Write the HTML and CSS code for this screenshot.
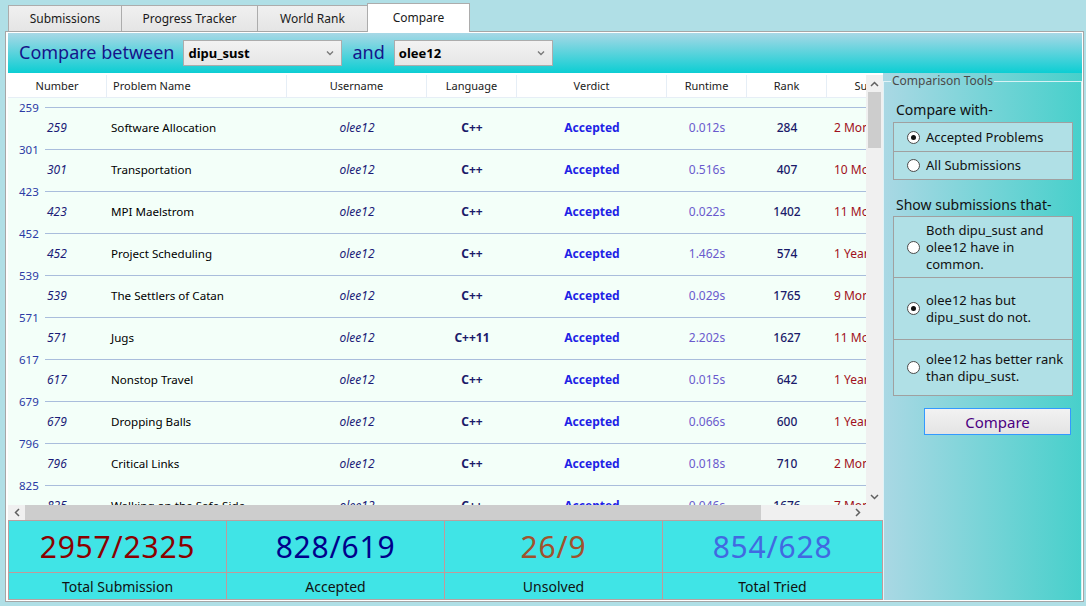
FILE: index.html
```html
<!DOCTYPE html>
<html>
<head>
<meta charset="utf-8">
<title>Compare</title>
<link rel="stylesheet" href="styles.css">
</head>
<body>
<div class="tabs">
  <div class="tab t1">Submissions</div>
  <div class="tab t2">Progress Tracker</div>
  <div class="tab t3">World Rank</div>
  <div class="tab t4 active">Compare</div>
</div>
<div class="panel">
  <div class="header">
    <span class="title">Compare between</span>
    <div class="select"><span>dipu_sust</span><svg class="chev" width="8" height="6" viewBox="0 0 8 6"><path d="M1 1.5 L4 4.5 L7 1.5" fill="none" stroke="#7a7a7a" stroke-width="1.4"/></svg></div>
    <span class="title and">and</span>
    <div class="select"><span>olee12</span><svg class="chev" width="8" height="6" viewBox="0 0 8 6"><path d="M1 1.5 L4 4.5 L7 1.5" fill="none" stroke="#7a7a7a" stroke-width="1.4"/></svg></div>
  </div>
  <div class="body">
    <div class="left">
      <div class="grid">
        <div class="grid-main">
          <div class="view">
            <div class="thead">
              <div class="c c-num">Number</div>
              <div class="c c-name hl">Problem Name</div>
              <div class="c c-user">Username</div>
              <div class="c c-lang">Language</div>
              <div class="c c-verd">Verdict</div>
              <div class="c c-run">Runtime</div>
              <div class="c c-rank">Rank</div>
              <div class="c c-time">Submission Time</div>
            </div>
            <div class="tbody">
              <div class="grp"><span class="gl">259</span><span class="gline"></span></div>
              <div class="row"><div class="c c-num num">259</div><div class="c c-name name">Software Allocation</div><div class="c c-user user">olee12</div><div class="c c-lang lang">C++</div><div class="c c-verd verd">Accepted</div><div class="c c-run run">0.012s</div><div class="c c-rank rank">284</div><div class="c c-time time">2 Months ago</div></div>
              <div class="grp"><span class="gl">301</span><span class="gline"></span></div>
              <div class="row"><div class="c c-num num">301</div><div class="c c-name name">Transportation</div><div class="c c-user user">olee12</div><div class="c c-lang lang">C++</div><div class="c c-verd verd">Accepted</div><div class="c c-run run">0.516s</div><div class="c c-rank rank">407</div><div class="c c-time time">10 Months ago</div></div>
              <div class="grp"><span class="gl">423</span><span class="gline"></span></div>
              <div class="row"><div class="c c-num num">423</div><div class="c c-name name">MPI Maelstrom</div><div class="c c-user user">olee12</div><div class="c c-lang lang">C++</div><div class="c c-verd verd">Accepted</div><div class="c c-run run">0.022s</div><div class="c c-rank rank">1402</div><div class="c c-time time">11 Months ago</div></div>
              <div class="grp"><span class="gl">452</span><span class="gline"></span></div>
              <div class="row"><div class="c c-num num">452</div><div class="c c-name name">Project Scheduling</div><div class="c c-user user">olee12</div><div class="c c-lang lang">C++</div><div class="c c-verd verd">Accepted</div><div class="c c-run run">1.462s</div><div class="c c-rank rank">574</div><div class="c c-time time">1 Year ago</div></div>
              <div class="grp"><span class="gl">539</span><span class="gline"></span></div>
              <div class="row"><div class="c c-num num">539</div><div class="c c-name name">The Settlers of Catan</div><div class="c c-user user">olee12</div><div class="c c-lang lang">C++</div><div class="c c-verd verd">Accepted</div><div class="c c-run run">0.029s</div><div class="c c-rank rank">1765</div><div class="c c-time time">9 Months ago</div></div>
              <div class="grp"><span class="gl">571</span><span class="gline"></span></div>
              <div class="row"><div class="c c-num num">571</div><div class="c c-name name">Jugs</div><div class="c c-user user">olee12</div><div class="c c-lang lang">C++11</div><div class="c c-verd verd">Accepted</div><div class="c c-run run">2.202s</div><div class="c c-rank rank">1627</div><div class="c c-time time">11 Months ago</div></div>
              <div class="grp"><span class="gl">617</span><span class="gline"></span></div>
              <div class="row"><div class="c c-num num">617</div><div class="c c-name name">Nonstop Travel</div><div class="c c-user user">olee12</div><div class="c c-lang lang">C++</div><div class="c c-verd verd">Accepted</div><div class="c c-run run">0.015s</div><div class="c c-rank rank">642</div><div class="c c-time time">1 Year ago</div></div>
              <div class="grp"><span class="gl">679</span><span class="gline"></span></div>
              <div class="row"><div class="c c-num num">679</div><div class="c c-name name">Dropping Balls</div><div class="c c-user user">olee12</div><div class="c c-lang lang">C++</div><div class="c c-verd verd">Accepted</div><div class="c c-run run">0.066s</div><div class="c c-rank rank">600</div><div class="c c-time time">1 Year ago</div></div>
              <div class="grp"><span class="gl">796</span><span class="gline"></span></div>
              <div class="row"><div class="c c-num num">796</div><div class="c c-name name">Critical Links</div><div class="c c-user user">olee12</div><div class="c c-lang lang">C++</div><div class="c c-verd verd">Accepted</div><div class="c c-run run">0.018s</div><div class="c c-rank rank">710</div><div class="c c-time time">2 Months ago</div></div>
              <div class="grp"><span class="gl">825</span><span class="gline"></span></div>
              <div class="row"><div class="c c-num num">825</div><div class="c c-name name">Walking on the Safe Side</div><div class="c c-user user">olee12</div><div class="c c-lang lang">C++</div><div class="c c-verd verd">Accepted</div><div class="c c-run run">0.046s</div><div class="c c-rank rank">1676</div><div class="c c-time time">7 Months ago</div></div>
            </div>
          </div>
          <div class="vscroll">
            <div class="sarrow"><svg width="9" height="6" viewBox="0 0 9 6"><path d="M1 5 L4.5 1.5 L8 5" fill="none" stroke="#606060" stroke-width="1.5"/></svg></div>
            <div class="vthumb"></div>
            <div class="vspace"></div>
            <div class="sarrow"><svg width="9" height="6" viewBox="0 0 9 6"><path d="M1 1 L4.5 4.5 L8 1" fill="none" stroke="#606060" stroke-width="1.5"/></svg></div>
          </div>
        </div>
        <div class="hscroll">
          <div class="harrow"><svg width="6" height="9" viewBox="0 0 6 9"><path d="M5 1 L1.5 4.5 L5 8" fill="none" stroke="#606060" stroke-width="1.5"/></svg></div>
          <div class="hthumb"></div>
          <div class="hspace"></div>
          <div class="harrow"><svg width="6" height="9" viewBox="0 0 6 9"><path d="M1 1 L4.5 4.5 L1 8" fill="none" stroke="#606060" stroke-width="1.5"/></svg></div>
          <div class="corner"></div>
        </div>
      </div>
      <div class="stats">
        <div class="stat"><div class="sv v1">2957/2325</div><div class="sl">Total Submission</div></div>
        <div class="stat"><div class="sv v2">828/619</div><div class="sl">Accepted</div></div>
        <div class="stat"><div class="sv v3">26/9</div><div class="sl">Unsolved</div></div>
        <div class="stat"><div class="sv v4">854/628</div><div class="sl">Total Tried</div></div>
      </div>
    </div>
    <div class="tools">
      <fieldset class="fs">
        <legend>Comparison Tools</legend>
        <div class="sect">Compare with-</div>
        <div class="box box1">
          <div class="opt oa1"><span class="radio on"></span><span>Accepted Problems</span></div>
          <div class="opt ob1"><span class="radio"></span><span>All Submissions</span></div>
        </div>
        <div class="sect s2">Show submissions that-</div>
        <div class="box box2">
          <div class="opt oa"><span class="radio"></span><span>Both dipu_sust and<br>olee12 have in<br>common.</span></div>
          <div class="opt ob"><span class="radio on"></span><span>olee12 has but<br>dipu_sust do not.</span></div>
          <div class="opt oc"><span class="radio"></span><span>olee12 has better rank<br>than dipu_sust.</span></div>
        </div>
        <div class="btn">Compare</div>
      </fieldset>
    </div>
  </div>
</div>
</body>
</html>
```
FILE: styles.css
```css
* { box-sizing: border-box; }
html, body { margin: 0; padding: 0; }
body {
  width: 1086px;
  height: 606px;
  overflow: hidden;
  background: #b0dfe6;
  font-family: "Noto Sans", "Open Sans", sans-serif;
  font-size: 12px;
  color: #1a1a1a;
}
.tabs {
  height: 31px;
  display: flex;
  align-items: flex-end;
  padding-left: 8px;
}
.tab {
  height: 26px;
  border: 1px solid #acacac;
  border-bottom: none;
  background: linear-gradient(#f0f0f0, #e5e5e5);
  font-size: 12px;
  display: flex;
  align-items: center;
  justify-content: center;
  padding-bottom: 1px;
}
.t1 { width: 114px; }
.t2 { width: 137px; margin-left: -1px; }
.t3 { width: 111px; margin-left: -1px; }
.t4 { width: 103px; margin-left: -1px; }
.tab.active {
  height: 29px;
  margin-bottom: -1px;
  background: #fff;
  position: relative;
  z-index: 1;
  padding-bottom: 1px;
}
.panel {
  margin-left: 5px;
  width: 1079px;
  border: 1px solid #a6a6a6;
  background: #fff;
  padding: 1px 1px 1px 2px;
}
.header {
  height: 40px;
  background: linear-gradient(#a8d8e6, #0cced3);
  display: flex;
  align-items: center;
  padding-left: 11px;
}
.title {
  font-size: 18px;
  color: #15158a;
  margin-top: -2px;
}
.and { margin-left: 10px; margin-right: 9px; }
.select {
  margin-left: 9px;
  width: 159px;
  height: 26px;
  border: 1px solid #acacac;
  background: linear-gradient(#f2f2f2, #e6e6e6);
  display: flex;
  align-items: center;
  justify-content: space-between;
  padding: 0 7px 0 4px;
  font-weight: bold;
  font-size: 13px;
  color: #000;
}
.and + .select { margin-left: 0; }
.body {
  display: flex;
  height: 527px;
}
.left {
  width: 875px;
  display: flex;
  flex-direction: column;
}
.grid {
  height: 447px;
  background: #fff;
  padding-top: 2px;
  display: flex;
  flex-direction: column;
}
.grid-main {
  height: 430px;
  display: flex;
}
.view {
  width: 858px;
  overflow: hidden;
  background: #f3fff9;
}
.thead {
  height: 23px;
  display: flex;
  background: #fff;
  border-bottom: 1px solid #e6eef6;
  white-space: nowrap;
}
.thead .c {
  font-size: 11px;
  border-right: 1px solid #e6eef6;
  display: flex;
  align-items: center;
  justify-content: center;
  padding-bottom: 1px;
}
.thead .c.hl { justify-content: flex-start; padding-left: 6px; }
.c { flex: none; white-space: nowrap; overflow: hidden; }
.c-num { width: 99px; }
.c-name { width: 180px; }
.c-user { width: 140px; }
.c-lang { width: 90px; }
.c-verd { width: 150px; }
.c-run { width: 80px; }
.c-rank { width: 80px; }
.c-time { width: 144px; }
.tbody { padding-top: 1px; }
.grp {
  height: 17px;
  display: flex;
  align-items: center;
  padding-left: 11px;
}
.gl { font-size: 11.5px; color: #2b3aa5; }
.gline { flex: 1; height: 1px; background: #a9bddc; margin-left: 6px; }
.row {
  height: 25px;
  display: flex;
  align-items: center;
  white-space: nowrap;
  padding-bottom: 2px;
}
.row .c { text-align: center; }
.row .num { text-align: left; padding-left: 39px; font-style: italic; color: #1c1c78; }
.row .name { text-align: left; padding-left: 4px; color: #000; font-size: 11.6px; }
.row .user { font-style: italic; color: #1c1c78; }
.row .lang { font-weight: bold; color: #1a1a6a; }
.row .verd { font-weight: bold; color: #1f1fe6; }
.row .run { color: #6a5acd; }
.row .rank { color: #1a1a6a; font-weight: 500; }
.row .time { text-align: left; padding-left: 7px; color: #a01020; }
.vscroll {
  width: 17px;
  background: #f0f0f0;
  display: flex;
  flex-direction: column;
}
.sarrow {
  height: 17px;
  display: flex;
  align-items: center;
  justify-content: center;
  flex: none;
}
.vthumb {
  height: 56px;
  margin: 0 2px;
  background: #cdcdcd;
  flex: none;
}
.vspace { flex: 1; }
.hscroll {
  height: 15px;
  display: flex;
  background: #f0f0f0;
}
.harrow {
  width: 17px;
  display: flex;
  align-items: center;
  justify-content: center;
  flex: none;
}
.hthumb { width: 736px; background: #cdcdcd; flex: none; }
.hspace { flex: 1; }
.corner { width: 17px; flex: none; }
.stats {
  height: 80px;
  display: grid;
  grid-template-columns: 218px 218px 218px 220px;
  background: #40e4e6;
  border: 1px solid #b9a0a0;
  border-right: none;
}
.stat {
  border-right: 1px solid #c09a9a;
  display: flex;
  flex-direction: column;
}
.sv {
  height: 52px;
  border-bottom: 1px solid #c09a9a;
  display: flex;
  align-items: center;
  justify-content: center;
  font-size: 30px;
  letter-spacing: 0.8px;
}
.sl {
  flex: 1;
  display: flex;
  align-items: center;
  justify-content: center;
  font-size: 14px;
  color: #111;
}
.v1 { color: #8b0000; }
.v2 { color: #00008b; }
.v3 { color: #a0522d; }
.v4 { color: #4169e1; }
.tools {
  width: 199px;
  background: linear-gradient(to right, #aad8e4, #47d0cb);
  padding-top: 1px;
}
.fs {
  margin: 0;
  height: 526px;
  border: 1px solid rgba(235, 248, 250, 0.85);
  border-bottom: none;
  padding: 0 8px 0 9px;
}
.fs legend {
  font-size: 12px;
  color: #4a4a4a;
  padding: 0 1px;
  margin-left: -2px;
  line-height: 14px;
}
.sect {
  font-size: 14px;
  color: #111;
  margin-top: 12px;
  padding-left: 3px;
  line-height: 19px;
}
.s2 { margin-top: 15px; }
.box {
  width: 180px;
  border: 1px solid #a0a0a0;
  background: #b0e0e6;
  margin-top: 3px;
}
.box2 { margin-top: 2px; }
.opt {
  display: flex;
  align-items: center;
  padding-left: 13px;
  font-size: 13px;
  color: #111;
  line-height: 17px;
}
.opt + .opt { border-top: 1px solid #a0a0a0; }
.oa1 { height: 28px; }
.ob1 { height: 28px; }
.oa { height: 60px; }
.ob { height: 62px; }
.oc { height: 56px; }
.radio {
  width: 13px;
  height: 13px;
  border-radius: 50%;
  border: 1px solid #4a4a4a;
  background: #fff;
  margin-right: 6px;
  flex: none;
  display: flex;
  align-items: center;
  justify-content: center;
}
.radio.on::after {
  content: "";
  width: 5px;
  height: 5px;
  border-radius: 50%;
  background: #111;
}
.btn {
  margin-top: 12px;
  margin-left: 31px;
  width: 147px;
  height: 27px;
  border: 1px solid #3399ff;
  background: linear-gradient(#f2f2f2, #e4e4e4);
  color: #4b0082;
  font-size: 15px;
  display: flex;
  align-items: center;
  justify-content: center;
}
```
